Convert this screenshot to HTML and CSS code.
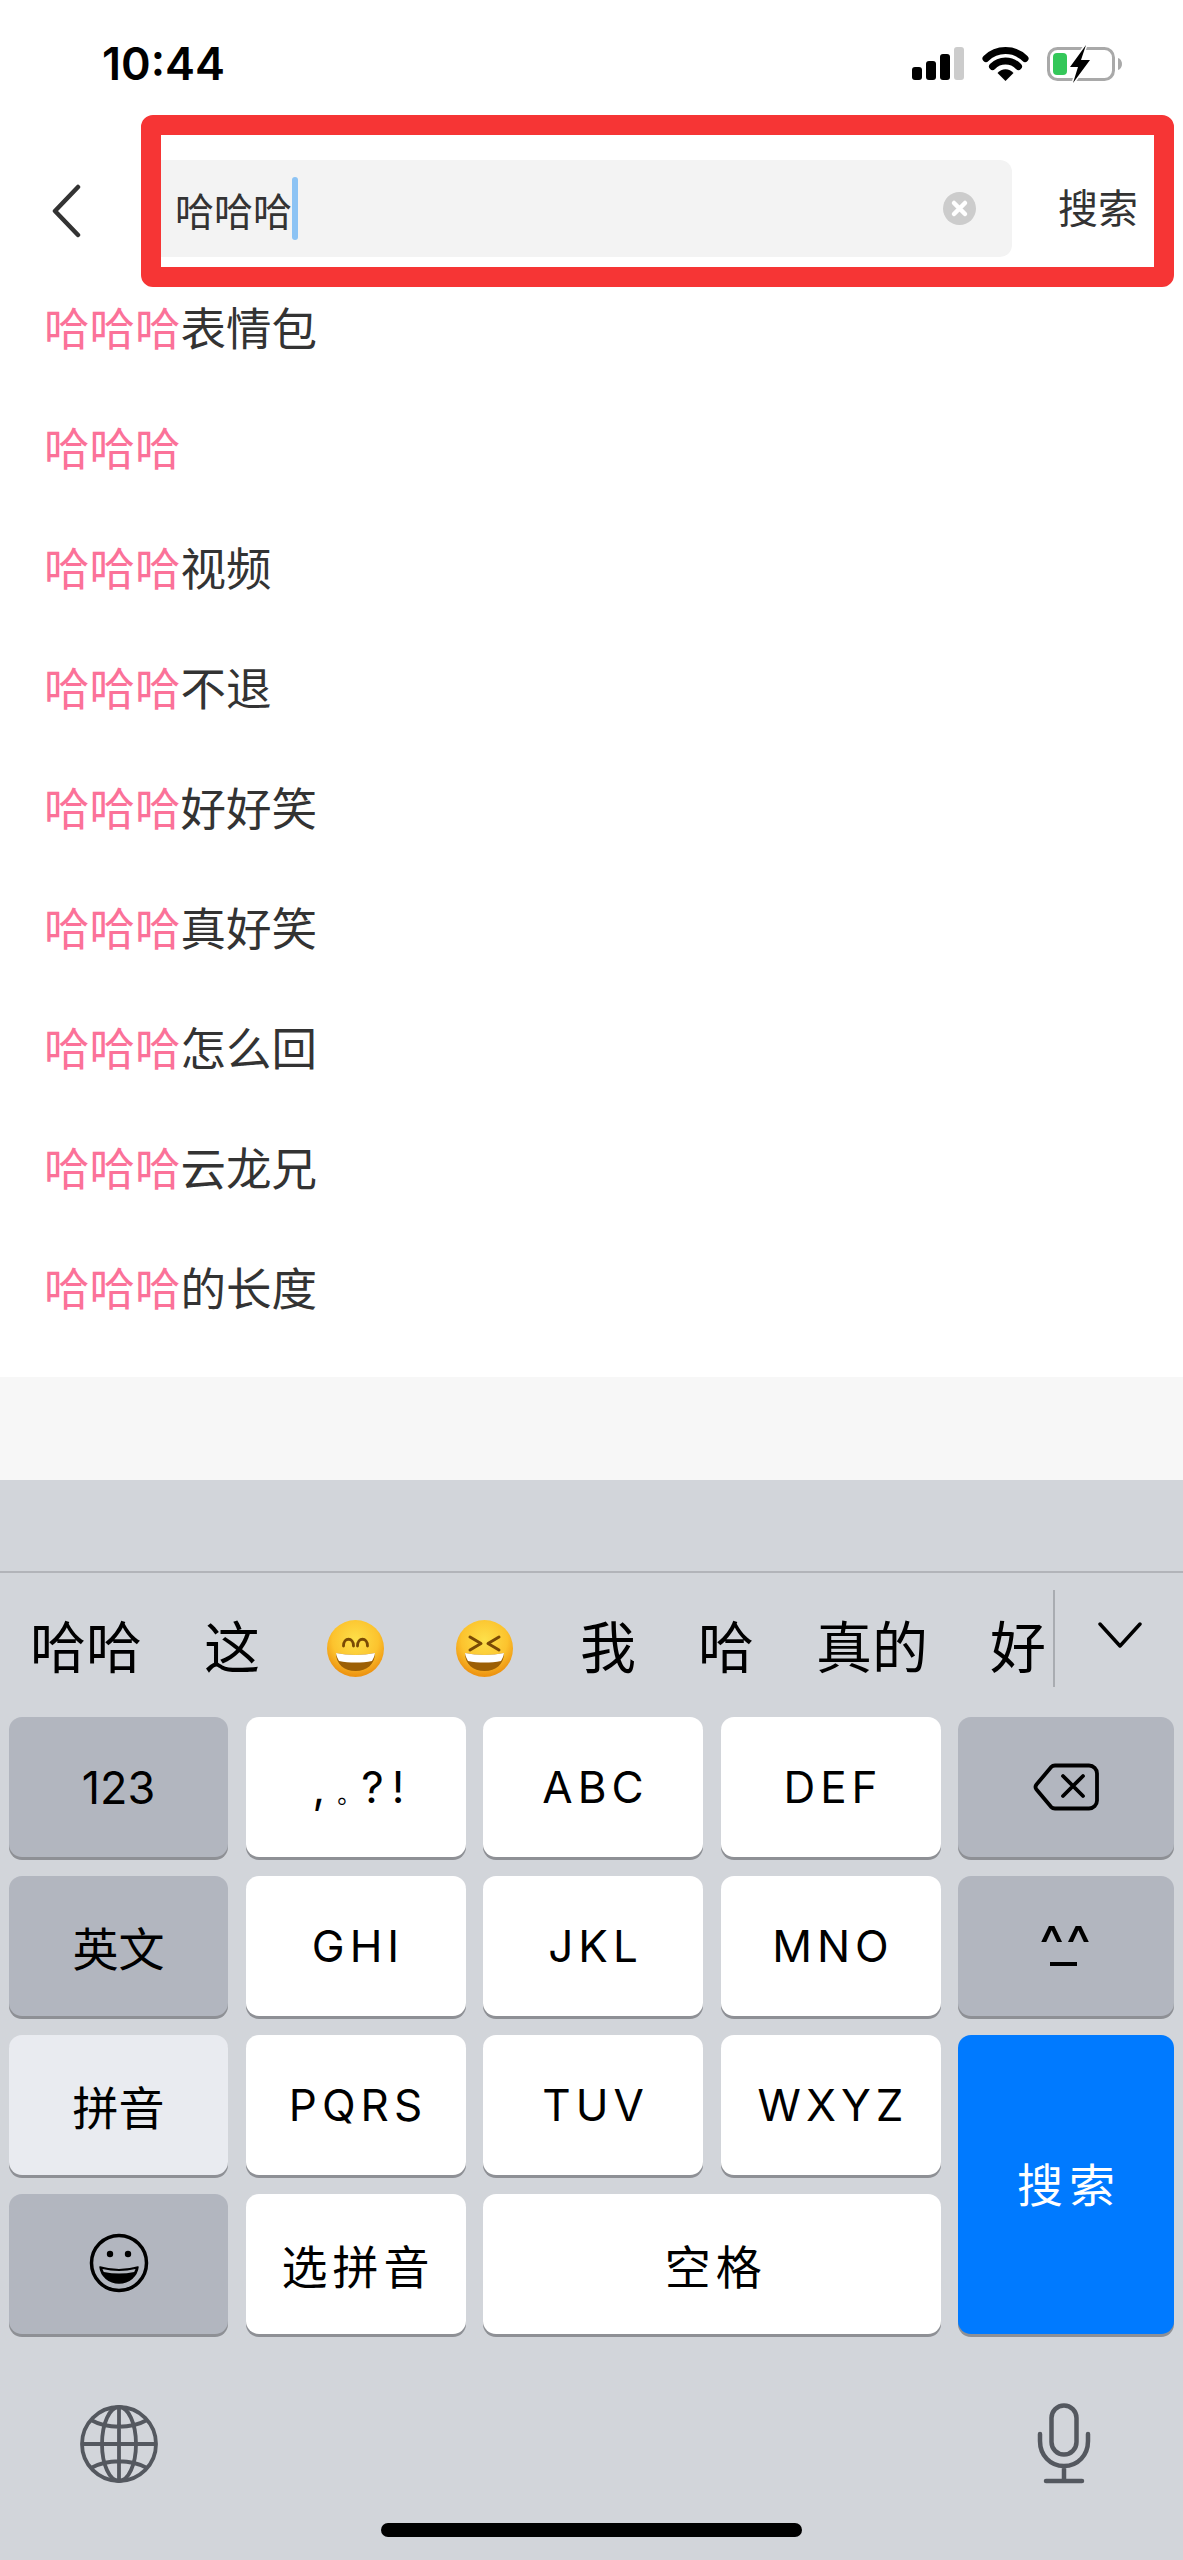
FILE: index.html
```html
<!DOCTYPE html>
<html lang="zh-CN">
<head>
<meta charset="utf-8">
<title>搜索</title>
<link rel="stylesheet" href="styles.css">
</head>
<body>
<div class="screen">
  <header class="status">
    <span class="time">10:44</span>
    <svg class="status-icons" width="210" height="38" viewBox="0 0 210 38">
      <rect x="0" y="20" width="10" height="13" rx="3" fill="#000"/>
      <rect x="14" y="14" width="10" height="19" rx="3" fill="#000"/>
      <rect x="28" y="7" width="10" height="26" rx="3" fill="#000"/>
      <rect x="42" y="0" width="10" height="33" rx="3" fill="#ccc"/>
      <path d="M74 11.500a28 28 0 0 1 39 0" fill="none" stroke="#000" stroke-width="7" stroke-linecap="round"/>
      <path d="M80.500 19.500a18 18 0 0 1 26 0" fill="none" stroke="#000" stroke-width="7" stroke-linecap="round"/>
      <path d="M85.500 26a10.500 10.500 0 0 1 16 0l-8 8z" fill="#000"/>
      <rect x="136.500" y="1.500" width="65" height="31" rx="9" fill="none" stroke="#a9a9a9" stroke-width="3"/>
      <path d="M206 11c2.500 .8 4 3 4 6s-1.500 5.200-4 6z" fill="#a9a9a9"/>
      <rect x="141" y="6" width="14" height="22" rx="4" fill="#34c759"/>
      <path d="M174 -2L158 20h8l-5 16 17-23h-9z" fill="#000" stroke="#fff" stroke-width="3" paint-order="stroke" stroke-linejoin="round"/>
    </svg>
  </header>

  <nav class="nav">
    <svg class="back" width="30" height="56" viewBox="0 0 30 56">
      <path d="M26 4L3 28l23 24" fill="none" stroke="#333" stroke-width="4.500" stroke-linecap="round" stroke-linejoin="round"/>
    </svg>
    <div class="field">
      <span class="field-text">哈哈哈</span><span class="caret"></span>
      <svg class="clear" width="33" height="33" viewBox="0 0 33 33">
        <circle cx="16.500" cy="16.500" r="16.500" fill="#ccc"/>
        <path d="M11 11l11 11M22 11L11 22" stroke="#fff" stroke-width="4.500" stroke-linecap="round"/>
      </svg>
    </div>
    <span class="search-btn">搜索</span>
    <div class="highlight"></div>
  </nav>

  <ul class="suggestions">
    <li class="row"><em class="hit">哈哈哈</em>表情包</li>
    <li class="row"><em class="hit">哈哈哈</em></li>
    <li class="row"><em class="hit">哈哈哈</em>视频</li>
    <li class="row"><em class="hit">哈哈哈</em>不退</li>
    <li class="row"><em class="hit">哈哈哈</em>好好笑</li>
    <li class="row"><em class="hit">哈哈哈</em>真好笑</li>
    <li class="row"><em class="hit">哈哈哈</em>怎么回</li>
    <li class="row"><em class="hit">哈哈哈</em>云龙兄</li>
    <li class="row"><em class="hit">哈哈哈</em>的长度</li>
  </ul>

  <div class="blank"></div>

  <section class="keyboard">
    <div class="kb-top"></div>
    <div class="candidates">
      <div class="cand-words">
        <span>哈哈</span>
        <span>这</span>
        <svg class="emoji" width="57" height="57" viewBox="0 0 57 57">
          <defs>
            <radialGradient id="face" cx="50%" cy="35%" r="62%">
              <stop offset="0" stop-color="#fde04a"/>
              <stop offset=".65" stop-color="#fcc32e"/>
              <stop offset="1" stop-color="#ee9512"/>
            </radialGradient>
          </defs>
          <circle cx="28.500" cy="28.500" r="28.500" fill="url(#face)"/>
          <path d="M16.500 26c0-9 10-9 10 0M30.500 26c0-9 10-9 10 0" fill="none" stroke="#7a4a05" stroke-width="2.800" stroke-linecap="round"/>
          <path d="M9 33c12 2.500 27 2.500 39 0c0 11-8 18-19.500 18S9 44 9 33z" fill="#9c5f05"/>
          <path d="M9 33c12 2.500 27 2.500 39 0c-.5 3-1.500 5.500-3 8c-10 2-23 2-33 0c-1.500-2.500-2.500-5-3-8z" fill="#fff"/>
        </svg>
        <svg class="emoji" width="57" height="57" viewBox="0 0 57 57">
          <circle cx="28.500" cy="28.500" r="28.500" fill="url(#face)"/>
          <path d="M14 17l11 6.500-11 6.500M43 17l-11 6.500 11 6.500" fill="none" stroke="#7a4a05" stroke-width="3" stroke-linecap="round" stroke-linejoin="round"/>
          <path d="M9 33c12 2.500 27 2.500 39 0c0 11-8 18-19.500 18S9 44 9 33z" fill="#9c5f05"/>
          <path d="M9 33c12 2.500 27 2.500 39 0c-.5 3-1.500 5.500-3 8c-10 2-23 2-33 0c-1.500-2.500-2.500-5-3-8z" fill="#fff"/>
        </svg>
        <span>我</span>
        <span>哈</span>
        <span>真的</span>
        <span>好</span>
      </div>
      <div class="cand-divider"></div>
      <svg class="cand-more" width="44" height="26" viewBox="0 0 44 26">
        <path d="M2 2l20 22L42 2" fill="none" stroke="#000" stroke-width="3.500" stroke-linecap="round" stroke-linejoin="round"/>
      </svg>
    </div>

    <div class="keys">
      <div class="key dark num">123</div>
      <div class="key latin punct"><span>,<span class="stop">。</span>?!</span></div>
      <div class="key latin">ABC</div>
      <div class="key latin">DEF</div>
      <div class="key dark">
        <svg width="66" height="48" viewBox="0 0 66 48">
          <path d="M22 2.500H56a8 8 0 0 1 8 8v27a8 8 0 0 1-8 8H22a6 6 0 0 1-4-1.700L3.500 26.500a4 4 0 0 1 0-5L18 4.200a6 6 0 0 1 4-1.700z" fill="none" stroke="#000" stroke-width="3.800" stroke-linejoin="round"/>
          <path d="M30 13l20 20M50 13L30 33" stroke="#000" stroke-width="3.800" stroke-linecap="round"/>
        </svg>
      </div>

      <div class="key dark cjk">英文</div>
      <div class="key latin">GHI</div>
      <div class="key latin">JKL</div>
      <div class="key latin">MNO</div>
      <div class="key dark kao">^^</div>

      <div class="key light cjk">拼音</div>
      <div class="key latin">PQRS</div>
      <div class="key latin">TUV</div>
      <div class="key latin">WXYZ</div>
      <div class="key go cjk">搜索</div>

      <div class="key dark">
        <svg class="smile" width="60" height="60" viewBox="0 0 60 60">
          <circle cx="30" cy="30" r="27.500" fill="none" stroke="#000" stroke-width="3.500"/>
          <circle cx="21" cy="21" r="3.200" fill="#000"/>
          <circle cx="39" cy="21" r="3.200" fill="#000"/>
          <path d="M11 34c12 3.500 26 3.500 38 0c-1 9-9 16-19 16S12 43 11 34z" fill="#000" stroke="#000" stroke-width="1.500" stroke-linejoin="round"/>
          <path d="M13.500 36c11 2.500 22 2.500 33 0c-.4 1-.8 2-1.300 3c-10 2-20 2-30.400 0c-.5-1-1-2-1.300-3z" fill="#b2b6bf"/>
        </svg>
      </div>
      <div class="key cjk spaced">选拼音</div>
      <div class="key cjk space">空格</div>
    </div>

    <div class="kb-bottom">
      <svg width="78" height="78" viewBox="0 0 78 78" fill="none" stroke="#54585f" stroke-width="3.800">
        <circle cx="39" cy="39" r="37"/>
        <ellipse cx="39" cy="39" rx="17" ry="37"/>
        <path d="M39 2v74M2 39h74M11 15c16 9 40 9 56 0M11 63c16-9 40-9 56 0"/>
      </svg>
      <svg width="54" height="81" viewBox="0 0 54 81" fill="none" stroke="#54585f" stroke-width="4.500" stroke-linecap="round">
        <rect x="14.500" y="2.500" width="25" height="49" rx="12.500"/>
        <path d="M3 31v7c0 14 10 25 24 25s24-11 24-25v-7M27 63v15M9 78h36"/>
      </svg>
    </div>
    <div class="home-bar"></div>
  </section>
</div>
</body>
</html>
```
FILE: styles.css
```css
* { box-sizing: border-box; }
html, body { margin: 0; padding: 0; background: #fff; }
body { font-family: "Inter", "Noto Sans CJK SC", sans-serif; color: #000; }

.screen {
  width: 1183px;
  height: 2560px;
  display: flex;
  flex-direction: column;
  overflow: hidden;
}

/* status bar */
.status {
  height: 100px;
  display: flex;
  align-items: flex-start;
  justify-content: space-between;
  padding: 37px 61px 0 102px;
}
.time {
  font-size: 45px;
  line-height: 54px;
  font-weight: 600;
}
.status-icons { margin-top: 10px; overflow: visible; }

/* search row */
.nav {
  position: relative;
  height: 170px;
  display: flex;
  align-items: flex-start;
  padding: 60px 0 0 52px;
}
.back { margin: 23px 68px 0 0; }
.field {
  width: 862px;
  height: 97px;
  background: #f3f3f3;
  border-radius: 12px;
  display: flex;
  align-items: center;
  padding: 0 25px 0 25px;
  color: #333;
  font-size: 39px;
}
.caret {
  width: 6px;
  height: 63px;
  background: #8cc3f4;
  border-radius: 3px;
}
.clear { margin-left: auto; margin-right: 11px; }
.search-btn {
  margin: 27px 0 0 46px;
  font-size: 40px;
  line-height: 44px;
  color: #333;
}
.highlight {
  position: absolute;
  left: 141px;
  top: 15px;
  width: 1033px;
  height: 172px;
  border: 20px solid #f63535;
  border-radius: 12px;
  pointer-events: none;
}

/* suggestions */
.suggestions {
  list-style: none;
  margin: 0;
  padding: 0 0 27px;
}
.row {
  height: 120px;
  padding-left: 44px;
  font-size: 45.5px;
  line-height: 120px;
  color: #333;
}
.hit { font-style: normal; color: #fb7299; }

.blank { height: 103px; background: #f7f7f7; }

/* keyboard */
.keyboard { flex: 1; background: #d2d5da; }
.kb-top { height: 93px; border-bottom: 2px solid #b2b4b9; }
.candidates {
  height: 144px;
  display: flex;
  align-items: center;
  padding: 0 0 0 30px;
  font-size: 56px;
  color: #000;
}
.cand-words {
  display: flex;
  align-items: center;
  gap: 62px;
  padding-top: 6px;
}
.cand-words span { line-height: 70px; }
.emoji { margin: 0 5px; }
.cand-divider {
  width: 2px;
  height: 97px;
  margin: -14px 0 0 7px;
  background: #a9acb1;
}
.cand-more { margin: -20px 0 0 43px; }

.keys {
  display: grid;
  grid-template-columns: 219px 220px 220px 220px 216px;
  grid-auto-rows: 140px;
  column-gap: 17.5px;
  row-gap: 19px;
  padding-left: 9px;
}
.key {
  background: #fff;
  border-radius: 13px;
  box-shadow: 0 3px 0 #8e9095;
  display: flex;
  align-items: center;
  justify-content: center;
}
.key.dark { background: #b2b6bf; }
.key.light { background: #e9ebf0; }
.latin { font-size: 44px; letter-spacing: 5px; padding-left: 5px; }
.num { font-size: 45px; }
.punct { font-size: 44px; letter-spacing: 8px; padding-left: 14px; }
.stop {
  margin-left: 4px;
  font-size: 24px;
  letter-spacing: 0;
}
.cjk { font-size: 46px; }
.spaced { letter-spacing: 5px; padding-left: 5px; }
.space { grid-column: span 2; letter-spacing: 5px; padding-left: 8px; }
.go {
  grid-row: span 2;
  background: #007aff;
  color: #fff;
  letter-spacing: 6px;
  padding: 0 0 6px 6px;
}
.kao {
  position: relative;
  font-size: 52px;
  letter-spacing: 2px;
  font-weight: 500;
  padding-bottom: 4px;
}
.kao::after {
  content: "";
  position: absolute;
  left: 92px;
  top: 86px;
  width: 27px;
  height: 4px;
  background: #000;
}
.smile { margin-top: -3px; }

.kb-bottom {
  margin-top: 69px;
  height: 81px;
  padding: 0 92px 0 80px;
  display: flex;
  align-items: center;
  justify-content: space-between;
}
.home-bar {
  width: 421px;
  height: 14px;
  margin: 39px auto 0;
  border-radius: 7px;
  background: #000;
}
```
